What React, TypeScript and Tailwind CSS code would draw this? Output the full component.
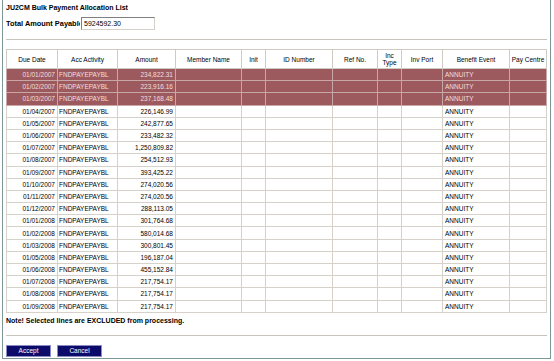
import React from "react";

type Row = { date: string; amount: string; excluded?: boolean };

const rows: Row[] = [
  { date: "01/01/2007", amount: "234,822.31", excluded: true },
  { date: "01/02/2007", amount: "223,916.16", excluded: true },
  { date: "01/03/2007", amount: "237,168.48", excluded: true },
  { date: "01/04/2007", amount: "226,146.99" },
  { date: "01/05/2007", amount: "242,877.65" },
  { date: "01/06/2007", amount: "233,482.32" },
  { date: "01/07/2007", amount: "1,250,809.82" },
  { date: "01/08/2007", amount: "254,512.93" },
  { date: "01/09/2007", amount: "393,425.22" },
  { date: "01/10/2007", amount: "274,020.56" },
  { date: "01/11/2007", amount: "274,020.56" },
  { date: "01/12/2007", amount: "288,113.05" },
  { date: "01/01/2008", amount: "301,764.68" },
  { date: "01/02/2008", amount: "580,014.68" },
  { date: "01/03/2008", amount: "300,801.45" },
  { date: "01/05/2008", amount: "196,187.04" },
  { date: "01/06/2008", amount: "455,152.84" },
  { date: "01/07/2008", amount: "217,754.17" },
  { date: "01/08/2008", amount: "217,754.17" },
  { date: "01/09/2008", amount: "217,754.17" },
];

const widths = [51, 60, 58, 66, 24, 67, 45, 24, 41, 67, 37];

export default function App() {
  return (
    <div className="w-[554px] h-[361px] bg-white font-['Liberation_Sans',Arial,sans-serif] text-black overflow-hidden">
      <div className="ml-[2px] w-[549px] h-[359px] border-l border-r border-b border-[#7d9696] pl-[3px] pr-[2px] flex flex-col">
        {/* header */}
        <div className="pt-[3px] h-[15px] text-[7px] leading-[9px] font-bold">JU2CM Bulk Payment Allocation List</div>
        <div className="flex items-center h-[15px] mt-[1px]">
          <span className="w-[74px] text-[7.4px] font-bold overflow-hidden whitespace-nowrap">Total Amount Payable</span>
          <div className="ml-[1px] w-[74px] h-[13px] border border-[#7f7f7f] border-r-[#d4d0c8] border-b-[#d4d0c8] text-[7px] leading-[11px] pl-[2px]">
            5924592.30
          </div>
        </div>
        <div className="mt-[8px] h-[2px] border-t border-[#c8c4bc] border-b border-b-white mr-[1px]"></div>

        {/* grid */}
        <table className="mt-[8px] table-fixed border-collapse text-[6.5px] leading-[7px] w-[540px]">
          <colgroup>
            {widths.map((w, i) => (
              <col key={i} style={{ width: w }} />
            ))}
          </colgroup>
          <thead>
            <tr className="h-[19px]">
              {["Due Date", "Acc Activity", "Amount", "Member Name", "Init", "ID Number", "Ref No."].map((h) => (
                <th key={h} className="border border-[#cfcbc2] font-normal text-center px-[1px]">{h}</th>
              ))}
              <th className="border border-[#cfcbc2] font-normal text-center">
                Inc<br />Type
              </th>
              {["Inv Port", "Benefit Event", "Pay Centre"].map((h) => (
                <th key={h} className="border border-[#cfcbc2] font-normal text-center whitespace-nowrap">{h}</th>
              ))}
            </tr>
          </thead>
          <tbody>
            {rows.map((r) => {
              const cell = r.excluded
                ? "border border-[#c9a7a7] bg-[#9c5a5e] text-[#f3dede]"
                : "border border-[#d6d2c9]";
              return (
                <tr key={r.date} className="h-[12.2px]">
                  <td className={`${cell} text-right pr-[2px]`}>{r.date}</td>
                  <td className={`${cell} pl-[1px]`}>FNDPAYEPAYBL</td>
                  <td className={`${cell} text-right pr-[2px]`}>{r.amount}</td>
                  <td className={cell}></td>
                  <td className={cell}></td>
                  <td className={cell}></td>
                  <td className={cell}></td>
                  <td className={cell}></td>
                  <td className={cell}></td>
                  <td className={`${cell} pl-[2px]`}>ANNUITY</td>
                  <td className={cell}></td>
                </tr>
              );
            })}
          </tbody>
        </table>

        <div className="mt-[3px] text-[7px] leading-[9px] font-bold">Note! Selected lines are EXCLUDED from processing.</div>
        <div className="mt-[10px] h-[2px] border-t border-[#c8c4bc] border-b border-b-white mr-[1px]"></div>

        <div className="mt-[8px] flex gap-[6px]">
          <button className="w-[45px] h-[12px] bg-[#0d0b6a] border border-[#8a8ac4] text-white text-[6.5px] leading-[10px]">Accept</button>
          <button className="w-[45px] h-[12px] bg-[#0d0b6a] border border-[#8a8ac4] text-white text-[6.5px] leading-[10px]">Cancel</button>
        </div>
      </div>
    </div>
  );
}
